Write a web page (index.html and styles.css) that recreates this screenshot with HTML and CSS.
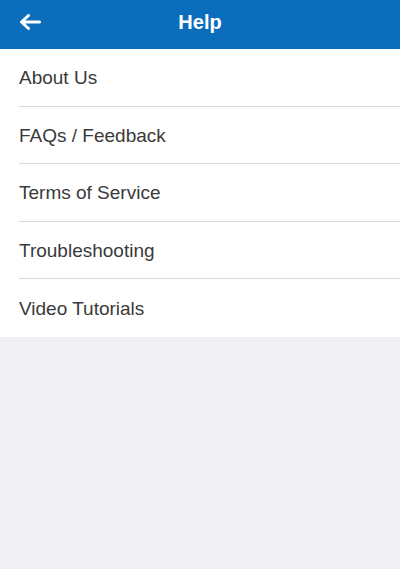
FILE: index.html
```html
<!DOCTYPE html>
<html lang="en">
<head>
<meta charset="utf-8">
<title>Help</title>
<link rel="stylesheet" href="styles.css">
</head>
<body>
<header class="topbar">
  <button class="back" aria-label="Back">
    <svg width="22" height="16" viewBox="0 0 22 16" aria-hidden="true">
      <path d="M20.5 8H3 M9.5 1.5L2.5 8L9.5 14.5" fill="none" stroke="#fff" stroke-width="3" stroke-linecap="round" stroke-linejoin="round"/>
    </svg>
  </button>
  <h1 class="title">Help</h1>
</header>
<ul class="menu">
  <li class="item">About Us</li>
  <li class="item">FAQs / Feedback</li>
  <li class="item">Terms of Service</li>
  <li class="item">Troubleshooting</li>
  <li class="item">Video Tutorials</li>
</ul>
</body>
</html>
```
FILE: styles.css
```css
html, body {
  margin: 0;
  padding: 0;
}
body {
  background: #efeff4;
  font-family: "Liberation Sans", Arial, sans-serif;
  width: 400px;
  height: 569px;
  overflow: hidden;
}
.topbar {
  position: relative;
  height: 49px;
  background: #0a6ebd;
  display: flex;
  align-items: center;
  justify-content: center;
}
.back {
  position: absolute;
  left: 19px;
  top: 14px;
  padding: 0;
  border: 0;
  background: none;
  width: 22px;
  height: 16px;
  display: flex;
}
.title {
  margin: 0;
  color: #fff;
  font-size: 20px;
  font-weight: bold;
  line-height: 1;
  padding-bottom: 6px;
}
.menu {
  list-style: none;
  margin: 0;
  padding: 0 0 0 19px;
  background: #fff;
}
.item {
  box-sizing: border-box;
  height: 57.5px;
  display: flex;
  align-items: center;
  font-size: 19px;
  color: #3a3a3a;
  border-bottom: 1px solid #d9d9dc;
  padding-top: 2px;
}
.item:last-child {
  border-bottom: 0;
}
```
